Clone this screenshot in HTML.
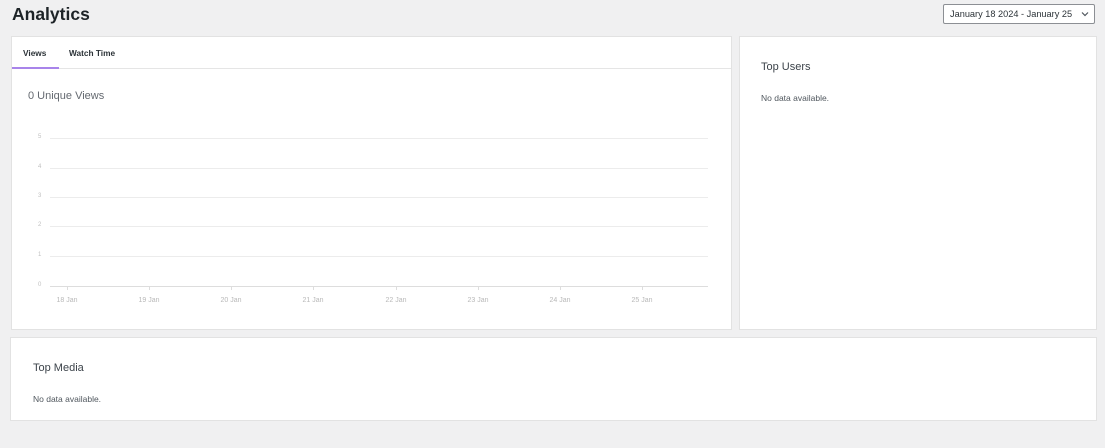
<!DOCTYPE html>
<html><head><style>
body{margin:0;width:1105px;height:448px;background:#f0f0f1;font-family:"Liberation Sans",Arial,sans-serif;position:relative;overflow:hidden;color:#1d2327}
.abs{position:absolute}
.card{position:absolute;background:#fff;border:1px solid #e2e2e2;box-sizing:border-box}
.h{font-size:11px;color:#3c434a}
.nd{font-size:8.5px;color:#50575e}
.gl{position:absolute;left:50px;width:658px;height:1px;background:#ececec}
.yl{position:absolute;left:38px;font-size:6px;color:#c0c0c0}
.xl{position:absolute;top:297px;font-size:7px;color:#b8b8b8;transform:translateX(-50%)}
.tk{position:absolute;top:286px;width:1px;height:4px;background:#ddd}
</style></head><body>
<div class="abs" style="left:12px;top:4px;font-size:17.5px;font-weight:bold;">Analytics</div>
<div class="abs" style="left:943px;top:4px;width:152px;height:20px;box-sizing:border-box;border:1px solid #8c8f94;border-radius:2px;background:#fff;font-size:9.2px;line-height:18px;padding-left:6px;color:#2c3338">January 18 2024 - January 25
<svg class="abs" style="right:5px;top:6px" width="8" height="6" viewBox="0 0 8 6"><path d="M1 1.5L4 4.5L7 1.5" fill="none" stroke="#50575e" stroke-width="1.2"/></svg></div>

<div class="card" style="left:11px;top:36px;width:721px;height:294px">
<div class="abs" style="left:0;top:31px;width:719px;height:1px;background:#e5e5e5"></div>
<div class="abs" style="left:0;top:30px;width:47px;height:2px;background:#a884ea"></div>
<div class="abs" style="left:11px;top:11px;font-size:8.3px;font-weight:bold;color:#2c3338">Views</div>
<div class="abs" style="left:57px;top:11px;font-size:8.3px;font-weight:bold;color:#2c3338">Watch Time</div>
<div class="abs" style="left:16px;top:53px;font-size:11px;color:#646970">0 Unique Views</div>
</div>
<div class="gl" style="top:138px"></div><div class="gl" style="top:168px"></div><div class="gl" style="top:197px"></div><div class="gl" style="top:226px"></div><div class="gl" style="top:256px"></div><div class="gl" style="top:286px;background:#ddd"></div>
<div class="yl" style="top:134px">5</div><div class="yl" style="top:164px">4</div><div class="yl" style="top:193px">3</div><div class="yl" style="top:222px">2</div><div class="yl" style="top:252px">1</div><div class="yl" style="top:282px">0</div>
<div class="tk" style="left:67px"></div><div class="tk" style="left:149px"></div><div class="tk" style="left:231px"></div><div class="tk" style="left:313px"></div><div class="tk" style="left:396px"></div><div class="tk" style="left:478px"></div><div class="tk" style="left:560px"></div><div class="tk" style="left:642px"></div>
<div class="xl" style="left:67px">18 Jan</div><div class="xl" style="left:149px">19 Jan</div><div class="xl" style="left:231px">20 Jan</div><div class="xl" style="left:313px">21 Jan</div><div class="xl" style="left:396px">22 Jan</div><div class="xl" style="left:478px">23 Jan</div><div class="xl" style="left:560px">24 Jan</div><div class="xl" style="left:642px">25 Jan</div>

<div class="card" style="left:739px;top:36px;width:358px;height:294px">
<div class="abs h" style="left:21px;top:24px">Top Users</div>
<div class="abs nd" style="left:21px;top:56px">No data available.</div>
</div>
<div class="card" style="left:10px;top:337px;width:1087px;height:84px">
<div class="abs h" style="left:22px;top:24px">Top Media</div>
<div class="abs nd" style="left:22px;top:56px">No data available.</div>
</div>
</body></html>
